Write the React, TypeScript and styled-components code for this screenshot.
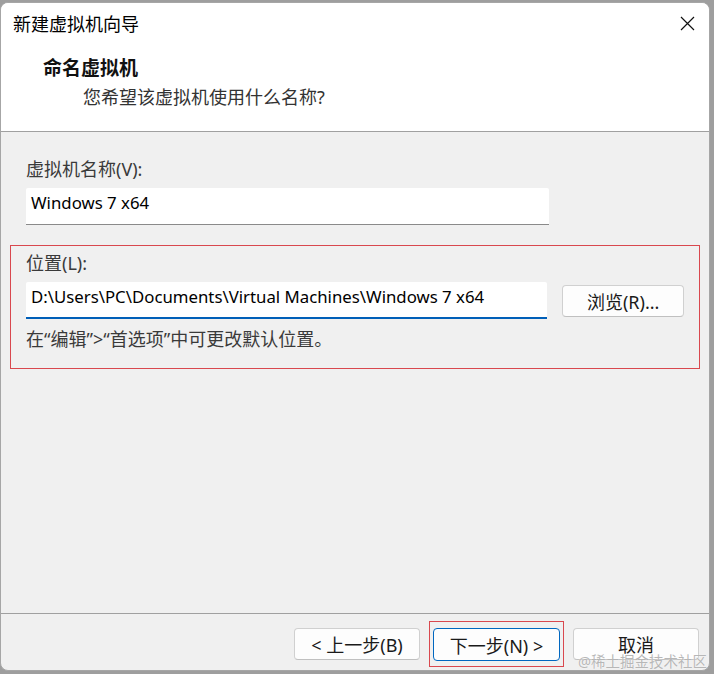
import React from "react";
import styled, { createGlobalStyle } from "styled-components";

const Global = createGlobalStyle`
  html, body { margin: 0; padding: 0; }
  body {
    width: 714px;
    height: 674px;
    overflow: hidden;
    background: #9e9e9e;
    font-family: "Noto Sans", "Noto Sans CJK SC", sans-serif;
  }
`;

const Stage = styled.div`
  width: 714px;
  height: 674px;
  padding: 2px 4px 3px 0;
  box-sizing: border-box;
  display: flex;
`;

const Window = styled.div`
  flex: 1;
  display: flex;
  flex-direction: column;
  background: #f0f0f0;
  border: 1px solid #a6a6a6;
  border-radius: 8px;
  overflow: hidden;
  position: relative;
`;

const Header = styled.div`
  height: 128px;
  background: #ffffff;
  border-bottom: 1px solid #a0a0a0;
  display: flex;
  flex-direction: column;
  flex-shrink: 0;
`;

const TitleBar = styled.div`
  height: 40px;
  display: flex;
  align-items: center;
  justify-content: space-between;
  padding: 0 14px 0 12px;
`;

const TitleText = styled.div`
  font-size: 18px;
  color: #000;
`;

const CloseButton = styled.div`
  width: 16px;
  height: 16px;
  display: flex;
  align-items: center;
  justify-content: center;
`;

const Heading = styled.div`
  margin: 13px 0 0 42px;
  font-size: 19px;
  line-height: 24px;
  font-weight: 700;
  color: #111;
`;

const SubHeading = styled.div`
  margin: 5px 0 0 82px;
  font-size: 18px;
  line-height: 24px;
  color: #333;
`;

const Body = styled.div`
  flex: 1;
  display: flex;
  flex-direction: column;
  padding: 25px 0 0 25px;
`;

const Label = styled.div`
  font-size: 18px;
  line-height: 24px;
  color: #3a3a3a;
`;

const Input = styled.div<{ $focused?: boolean }>`
  width: 523px;
  height: 37px;
  box-sizing: border-box;
  background: #fff;
  border-bottom: ${(p) => (p.$focused ? "2px solid #005fb8" : "1px solid #8a8a8a")};
  border-radius: 2px 2px 0 0;
  display: flex;
  align-items: center;
  padding: 0 0 ${(p) => (p.$focused ? "7px" : "8px")} 5px;
  font-size: 16.8px;
  color: #000;
  white-space: nowrap;
  overflow: hidden;
`;

const Field = styled.div`
  display: flex;
  flex-direction: column;
  gap: 7px;
`;

const Highlight = styled.div`
  margin: 20px 9px 0 -16px;
  border: 1px solid #d9484e;
  padding: 5px 15px 17px 15px;
  display: flex;
  flex-direction: column;
`;

const Row = styled.div`
  display: flex;
  align-items: center;
  gap: 15px;
`;

const Button = styled.div<{ $primary?: boolean; $w?: number }>`
  width: ${(p) => p.$w ?? 126}px;
  height: ${(p) => (p.$primary ? 33 : 32)}px;
  box-sizing: border-box;
  background: #fdfdfd;
  border: 1px solid ${(p) => (p.$primary ? "#0067c0" : "#d0d0d0")};
  border-bottom-color: ${(p) => (p.$primary ? "#0067c0" : "#c0c0c0")};
  border-radius: 4px;
  display: flex;
  align-items: center;
  justify-content: center;
  font-size: 18px;
  color: #1a1a1a;
  white-space: pre;
  position: relative;
`;

const Hint = styled.div`
  margin-top: 8px;
  font-size: 18px;
  line-height: 24px;
  color: #3a3a3a;
`;

const Footer = styled.div`
  height: 57px;
  box-sizing: border-box;
  flex-shrink: 0;
  border-top: 1px solid #a0a0a0;
  display: flex;
  justify-content: flex-end;
  align-items: flex-start;
  padding: 14px 10px 0 0;
  gap: 13px;
`;

const Marked = styled.div`
  position: relative;
  &::after {
    content: "";
    position: absolute;
    inset: -7px -4px -6px -4px;
    border: 1px solid #d9484e;
    pointer-events: none;
  }
`;

const Watermark = styled.div`
  position: absolute;
  right: 2px;
  bottom: -1px;
  font-size: 14.5px;
  line-height: 20px;
  color: rgba(160, 160, 160, 0.75);
  text-shadow: 0 0 1px #fff;
  pointer-events: none;
`;

export default function App() {
  return (
    <>
      <Global />
      <Stage>
        <Window>
          <Header>
            <TitleBar>
              <TitleText>新建虚拟机向导</TitleText>
              <CloseButton>
                <svg width="15" height="15" viewBox="0 0 15 15">
                  <path d="M1 1 L14 14 M14 1 L1 14" stroke="#111" strokeWidth="1.2" />
                </svg>
              </CloseButton>
            </TitleBar>
            <Heading>命名虚拟机</Heading>
            <SubHeading>您希望该虚拟机使用什么名称?</SubHeading>
          </Header>
          <Body>
            <Field>
              <Label>虚拟机名称(V):</Label>
              <Input>Windows 7 x64</Input>
            </Field>
            <Highlight>
              <Field>
                <Label>位置(L):</Label>
                <Row>
                  <Input $focused>D:\Users\PC\Documents\Virtual Machines\Windows 7 x64</Input>
                  <Button $w={122}>浏览(R)...</Button>
                </Row>
              </Field>
              <Hint>在“编辑”&gt;“首选项”中可更改默认位置。</Hint>
            </Highlight>
          </Body>
          <Footer>
            <Button>{"< 上一步(B)"}</Button>
            <Marked>
              <Button $primary $w={127}>{"下一步(N) >"}</Button>
            </Marked>
            <Button>取消</Button>
          </Footer>
          <Watermark>@稀土掘金技术社区</Watermark>
        </Window>
      </Stage>
    </>
  );
}
